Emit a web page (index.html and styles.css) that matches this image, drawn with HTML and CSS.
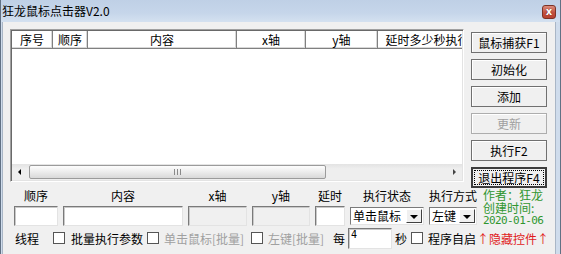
FILE: index.html
```html
<!doctype html>
<html>
  <head>
    <meta charset="utf-8">
    <title>狂龙鼠标点击器V2.0</title>
    <link rel="stylesheet" href="styles.css">
  </head>
  <body>
    <div class="window">
      <div class="titlebar">
        <span class="title">狂龙鼠标点击器V2.0</span>
        <span class="close">x</span>
      </div>
      <div class="client">
        <div class="top">
          <div class="listview">
            <div class="header">
              <span class="col col-no">序号</span>
              <span class="col col-order">顺序</span>
              <span class="col col-content">内容</span>
              <span class="col col-x">x轴</span>
              <span class="col col-y">y轴</span>
              <span class="col col-delay">延时多少秒执行</span>
            </div>
            <div class="rows"></div>
            <div class="hscroll">
              <span class="arrow arrow-left"></span>
              <span class="track">
                <span class="thumb"><span class="grip"></span></span>
              </span>
              <span class="arrow arrow-right"></span>
            </div>
          </div>
          <div class="buttons">
            <button class="btn">鼠标捕获F1</button>
            <button class="btn">初始化</button>
            <button class="btn">添加</button>
            <button class="btn" disabled>更新</button>
            <button class="btn">执行F2</button>
            <button class="btn btn-default"><span class="focus">退出程序F4</span></button>
          </div>
        </div>

        <div class="fields">
          <div class="field f-order">
            <label>顺序</label>
            <span class="textbox"></span>
          </div>
          <div class="field f-content">
            <label>内容</label>
            <span class="textbox"></span>
          </div>
          <div class="field f-x">
            <label>x轴</label>
            <span class="textbox disabled"></span>
          </div>
          <div class="field f-y">
            <label>y轴</label>
            <span class="textbox disabled"></span>
          </div>
          <div class="field f-delay">
            <label>延时</label>
            <span class="textbox"></span>
          </div>
          <div class="field f-state">
            <label>执行状态</label>
            <span class="combo"><span class="combo-text">单击鼠标</span><span class="drop"></span></span>
          </div>
          <div class="field f-mode">
            <label>执行方式</label>
            <span class="combo"><span class="combo-text">左键</span><span class="drop"></span></span>
          </div>
          <div class="author">
            <div>作者：狂龙</div>
            <div>创建时间:</div>
            <div class="date">2020-01-06</div>
          </div>
        </div>

        <div class="options">
          <span>线程</span>
          <span class="check"></span>
          <span>批量执行参数</span>
          <span class="check"></span>
          <span class="muted">单击鼠标[批量]</span>
          <span class="check"></span>
          <span class="muted">左键[批量]</span>
          <span>每</span>
          <span class="textbox interval">4</span>
          <span>秒</span>
          <span class="check"></span>
          <span>程序自启</span>
          <span class="hide-link">↑隐藏控件↑</span>
        </div>
      </div>
    </div>
  </body>
</html>
```

FILE: styles.css
```css
* {
  box-sizing: border-box;
}

body {
  margin: 0;
  font-family: "Noto Sans CJK SC", "Noto Sans", sans-serif;
  font-size: 12px;
  color: #000;
}

.window {
  width: 561px;
  height: 254px;
  display: flex;
  flex-direction: column;
  background: #cfdcec;
  border-left: 1px solid #617184;
  border-right: 1px solid #617184;
}

.titlebar {
  height: 22px;
  flex-shrink: 0;
  display: flex;
  align-items: center;
  justify-content: space-between;
  padding: 0 4px 0 1px;
  background: linear-gradient(#bfd0e6, #c6d6ea 60%, #d4e1f0);
}

.title {
  line-height: 22px;
}

.close {
  width: 14px;
  height: 14px;
  margin-top: 2px;
  border: 1px solid #7c3326;
  border-radius: 3px;
  background: linear-gradient(#dc8c7c, #c25240 55%, #b8412f);
  color: #fff;
  font: bold 10px/11px "DejaVu Sans", sans-serif;
  text-align: center;
  text-shadow: 0 0 1px #5a1a10;
}

.client {
  flex: 1;
  margin: 0 4px 0 1px;
  padding: 7px 0 0 7px;
  background: #f0f0f0;
  border-left: 1px solid #a9b6c6;
  border-right: 1px solid #a9b6c6;
}

.top {
  display: flex;
  align-items: flex-start;
  gap: 7px;
  height: 153px;
}

/* list view */

.listview {
  width: 454px;
  height: 153px;
  padding: 1px;
  display: flex;
  flex-direction: column;
  background: #fff;
  border: 1px solid;
  border-color: #a0a0a0 #fff #fff #a0a0a0;
  box-shadow: inset 1px 1px #696969, inset -1px -1px #e3e3e3;
  overflow: hidden;
}

.header {
  display: flex;
  height: 18px;
  flex-shrink: 0;
  overflow: hidden;
  white-space: nowrap;
}

.col {
  flex-shrink: 0;
  line-height: 17px;
  text-align: center;
  background: #fff;
  border-right: 1px solid #808080;
  border-bottom: 1px solid #808080;
  box-shadow: inset -1px -1px #d8d8d8;
}

.col-no { width: 41px; }
.col-order { width: 35px; }
.col-content { width: 149px; }
.col-x { width: 69px; }
.col-y { width: 72px; }
.col-delay { width: 100px; }

.rows {
  flex: 1;
}

.hscroll {
  height: 16px;
  flex-shrink: 0;
  display: flex;
  align-items: center;
  background: linear-gradient(#e3e3e3, #eeeeee 30%, #eeeeee);
}

.arrow {
  width: 17px;
  height: 16px;
  position: relative;
}

.arrow::after {
  content: "";
  position: absolute;
  top: 5px;
  border-top: 3px solid transparent;
  border-bottom: 3px solid transparent;
}

.arrow-left::after {
  left: 6px;
  border-right: 3px solid #000;
}

.arrow-right::after {
  left: 8px;
  border-left: 3px solid #444;
}

.track {
  flex: 1;
  height: 16px;
  padding: 1px 0;
}

.thumb {
  display: flex;
  align-items: center;
  justify-content: center;
  width: 297px;
  height: 14px;
  border: 1px solid #9b9b9b;
  border-radius: 2px;
  background: linear-gradient(#fdfdfd, #ececec 50%, #d9d9d9);
}

.grip {
  width: 7px;
  height: 6px;
  background: repeating-linear-gradient(90deg, #8a8a8a 0 1px, transparent 1px 3px);
}

/* buttons */

.buttons {
  display: flex;
  flex-direction: column;
  gap: 6px;
  padding-top: 3px;
}

.btn {
  width: 76px;
  height: 21px;
  padding: 0;
  font: inherit;
  line-height: 19px;
  color: #000;
  background: #f0f0f0;
  border: 1px solid #707070;
  box-shadow: inset 1px 1px #fff;
}

.btn:disabled {
  color: #a0a0a0;
  border-color: #adadad;
}

.btn-default {
  border: 2px solid #3c3c3c;
  box-shadow: none;
  line-height: 17px;
}

.focus {
  display: block;
  margin: 1px;
  line-height: 13px;
  border: 1px dotted #000;
}

/* edit fields */

.fields {
  display: flex;
  gap: 5px;
  margin: 6px 0 0 4px;
}

.field {
  display: flex;
  flex-direction: column;
  align-items: center;
  gap: 2px;
}

.field label {
  line-height: 16px;
}

.f-order { width: 44px; }
.f-content { width: 120px; }
.f-x { width: 59px; }
.f-y { width: 58px; }
.f-delay { width: 30px; }
.f-state { width: 74px; }
.f-mode { width: 48px; }

.textbox {
  display: block;
  width: 100%;
  height: 20px;
  background: #fff;
  border: 1px solid;
  border-color: #7a7a7a #e3e3e3 #e3e3e3 #7a7a7a;
  box-shadow: inset 1px 1px #c9c9c9;
}

.textbox.disabled {
  background: #f0f0f0;
}

.combo {
  display: flex;
  width: 100%;
  height: 18px;
  margin-top: 1px;
  padding: 1px;
  background: #fff;
  border: 1px solid;
  border-color: #7a7a7a #e3e3e3 #e3e3e3 #7a7a7a;
}

.combo-text {
  flex: 1;
  padding-left: 1px;
  line-height: 14px;
}

.drop {
  width: 16px;
  position: relative;
  background: #f0f0f0;
  border: 1px solid;
  border-color: #fff #404040 #404040 #fff;
}

.drop::after {
  content: "";
  position: absolute;
  left: 3px;
  top: 5px;
  border-left: 4px solid transparent;
  border-right: 4px solid transparent;
  border-top: 4px solid #000;
}

.author {
  margin-left: 1px;
  color: #2f962f;
  line-height: 13px;
}

.author .date {
  margin-top: 1px;
  font: 11px/11px "DejaVu Sans Mono", monospace;
  letter-spacing: -0.6px;
}

/* options row */

.options {
  display: grid;
  grid-template-columns: 38px 18px 76px 17px 87px 17px 65px 15px 47px 16px 17px 49px auto;
  align-items: center;
  height: 22px;
  margin: 1px 0 0 5px;
  white-space: nowrap;
}

.check {
  width: 12px;
  height: 12px;
  background: #fff;
  border: 1px solid #555;
}

.muted {
  color: #a0a0a0;
}

.interval {
  width: 44px;
  height: 21px;
  padding-left: 2px;
  font: 10px/12px "DejaVu Sans Mono", monospace;
}

.hide-link {
  color: #e01b1b;
}
```
